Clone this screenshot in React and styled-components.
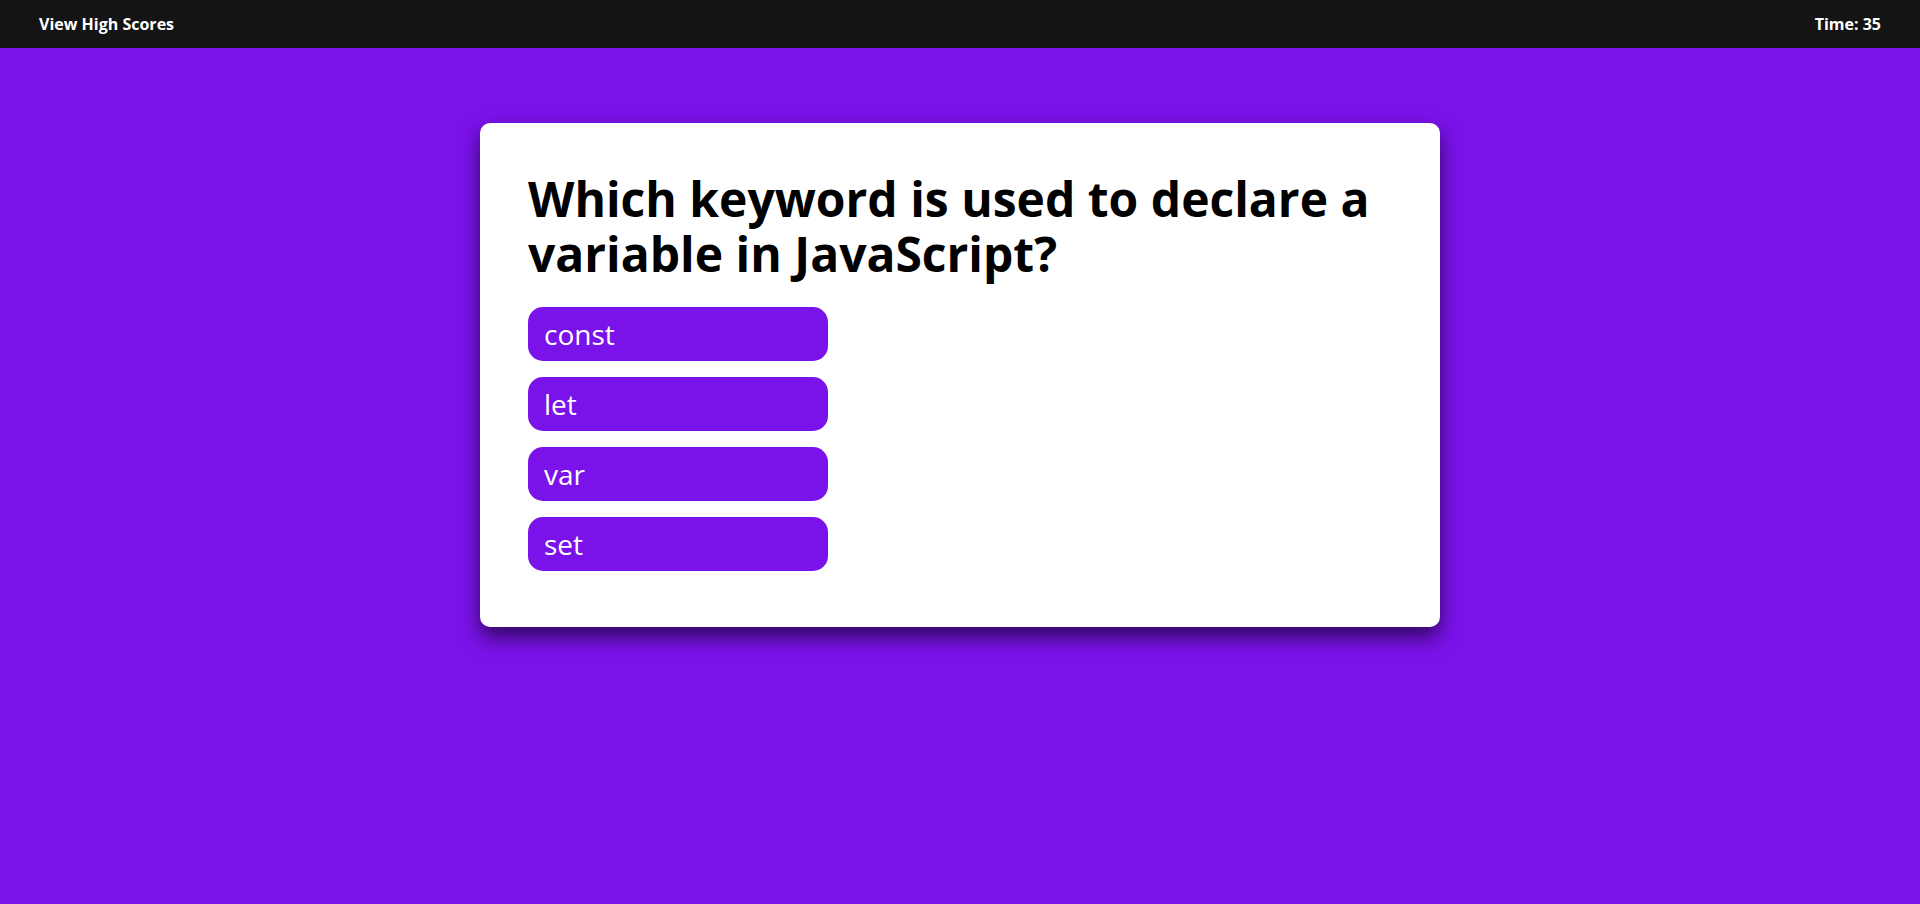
import React from "react";
import styled, { createGlobalStyle } from "styled-components";

const GlobalStyle = createGlobalStyle`
  html, body {
    margin: 0;
    padding: 0;
    height: 100%;
  }
  body {
    background: #7a12ea;
    font-family: "Open Sans", "Noto Sans", sans-serif;
  }
`;

const Header = styled.header`
  height: 48px;
  background: #141414;
  color: #ffffff;
  display: flex;
  align-items: center;
  justify-content: space-between;
  padding: 0 39px;
  font-size: 16px;
  font-weight: 700;
`;

const HeaderLink = styled.a`
  color: #ffffff;
  text-decoration: none;
  cursor: pointer;
`;

const Main = styled.main`
  display: flex;
  justify-content: center;
  padding-top: 75px;
`;

const Card = styled.section`
  width: 960px;
  box-sizing: border-box;
  background: #ffffff;
  border-radius: 10px;
  padding: 48px 48px 56px;
  box-shadow: 0 10px 20px rgba(0, 0, 0, 0.6);
`;

const Question = styled.h2`
  margin: 0 0 26px;
  font-size: 48px;
  line-height: 55px;
  font-weight: 700;
  color: #000000;
`;

const Choices = styled.div`
  display: flex;
  flex-direction: column;
  align-items: flex-start;
  gap: 16px;
`;

const Choice = styled.button`
  width: 300px;
  height: 54px;
  box-sizing: border-box;
  border: none;
  border-radius: 15px;
  background: #7a12ea;
  color: #ffffff;
  font-family: inherit;
  font-size: 28px;
  text-align: left;
  padding: 0 16px;
  cursor: pointer;
`;

const choices = ["const", "let", "var", "set"];

export default function App() {
  return (
    <>
      <GlobalStyle />
      <Header>
        <HeaderLink>View High Scores</HeaderLink>
        <span>Time: 35</span>
      </Header>
      <Main>
        <Card>
          <Question>Which keyword is used to declare a variable in JavaScript?</Question>
          <Choices>
            {choices.map((c) => (
              <Choice key={c}>{c}</Choice>
            ))}
          </Choices>
        </Card>
      </Main>
    </>
  );
}
